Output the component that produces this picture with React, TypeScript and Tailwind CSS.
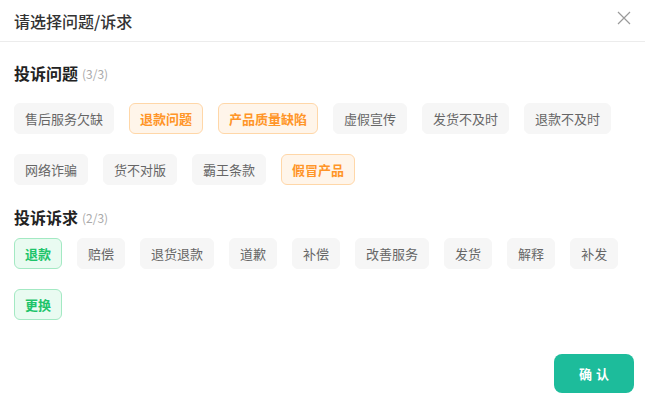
import React from 'react';

type Chip = { label: string; active?: boolean };

const problems: Chip[] = [
  { label: '售后服务欠缺' },
  { label: '退款问题', active: true },
  { label: '产品质量缺陷', active: true },
  { label: '虚假宣传' },
  { label: '发货不及时' },
  { label: '退款不及时' },
  { label: '网络诈骗' },
  { label: '货不对版' },
  { label: '霸王条款' },
  { label: '假冒产品', active: true },
];

const demands: Chip[] = [
  { label: '退款', active: true },
  { label: '赔偿' },
  { label: '退货退款' },
  { label: '道歉' },
  { label: '补偿' },
  { label: '改善服务' },
  { label: '发货' },
  { label: '解释' },
  { label: '补发' },
  { label: '更换', active: true },
];

const TagList = ({ items, tone }: { items: Chip[]; tone: 'orange' | 'green' }) => (
  <div className="flex flex-wrap gap-x-[15px] gap-y-[20px]">
    {items.map((c) => {
      let cls = 'bg-[#f6f6f6] border-[#f6f6f6] text-[#666666] font-normal';
      if (c.active) {
        cls =
          tone === 'orange'
            ? 'bg-[#fff5ea] border-[#ffd7a8] text-[#ff9528] font-bold'
            : 'bg-[#e9fbf1] border-[#a3e9c3] text-[#1ec46a] font-bold';
      }
      return (
        <span
          key={c.label}
          className={`h-[31px] px-[10px] flex items-center rounded-[6px] border text-[13px] ${cls}`}
        >
          {c.label}
        </span>
      );
    })}
  </div>
);

export default function App() {
  return (
    <div
      className="w-[645px] h-[400px] bg-white flex flex-col"
      style={{ fontFamily: '"Noto Sans CJK SC", "Noto Sans", sans-serif' }}
    >
      {/* Header */}
      <div className="h-[42px] border-b border-[#ececec] flex items-center justify-between pl-[14px] pr-[14px] shrink-0">
        <span className="text-[16px] font-medium text-[#333333] leading-none">请选择问题/诉求</span>
        <svg width="14" height="14" viewBox="0 0 14 14" className="mt-[-5px]">
          <path d="M1 1L13 13M13 1L1 13" stroke="#9a9a9a" strokeWidth="1.2" />
        </svg>
      </div>

      <div className="px-[14px]">
        {/* 投诉问题 */}
        <div className="mt-[19px] h-[24px] flex items-center">
          <span className="text-[16px] font-bold text-[#222222]">投诉问题</span>
          <span className="ml-[4px] text-[12px] text-[#aaaaaa] mt-[2px]">(3/3)</span>
        </div>
        <div className="mt-[18px]">
          <TagList items={problems} tone="orange" />
        </div>

        {/* 投诉诉求 */}
        <div className="mt-[20px] h-[24px] flex items-center">
          <span className="text-[16px] font-bold text-[#222222]">投诉诉求</span>
          <span className="ml-[4px] text-[12px] text-[#aaaaaa] mt-[2px]">(2/3)</span>
        </div>
        <div className="mt-[9px]">
          <TagList items={demands} tone="green" />
        </div>
      </div>

      {/* Footer */}
      <div className="flex justify-end pr-[11px] mt-[34px]">
        <button className="w-[80px] h-[39px] rounded-[8px] bg-[#1dbc9b] text-white text-[13px] font-bold tracking-[4px] pl-[4px]">
          确认
        </button>
      </div>
    </div>
  );
}
